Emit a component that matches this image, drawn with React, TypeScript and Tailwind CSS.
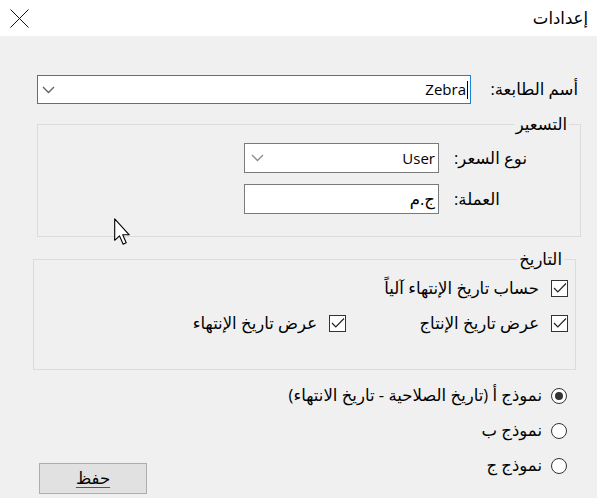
import React from "react";

const font = "font-['Open_Sans','DejaVu_Sans',sans-serif]";

function Chevron({ light }: { light?: boolean }) {
  return (
    <svg width="13" height="8" viewBox="0 0 13 8" className="shrink-0">
      <polyline
        points="1,1 6.5,6.5 12,1"
        fill="none"
        stroke={light ? "#8a8a8a" : "#606060"}
        strokeWidth="1.3"
      />
    </svg>
  );
}

function Check() {
  return (
    <span className="flex h-[17px] w-[17px] shrink-0 items-center justify-center border border-[#333] bg-white">
      <svg width="14" height="12" viewBox="0 0 14 12">
        <polyline points="1,6 4.8,10 13,1.5" fill="none" stroke="#222" strokeWidth="1.2" />
      </svg>
    </span>
  );
}

function Radio({ on }: { on?: boolean }) {
  return (
    <span className="flex h-[16px] w-[16px] shrink-0 items-center justify-center rounded-full border border-[#333] bg-white">
      {on && <span className="h-[8px] w-[8px] rounded-full bg-[#333]" />}
    </span>
  );
}

function Group({ title, className, children }: { title: string; className: string; children: React.ReactNode }) {
  return (
    <div className={"relative border border-[#dcdcdc] " + className}>
      <span className="absolute -top-[11px] right-[11px] bg-[#f0f0f0] px-[2px] leading-[20px]">{title}</span>
      {children}
    </div>
  );
}

export default function App() {
  return (
    <div dir="rtl" className={"relative flex h-[498px] w-[597px] flex-col overflow-hidden bg-[#f0f0f0] text-[16.5px] text-black " + font}>
      {/* title bar */}
      <div className="flex h-[36px] shrink-0 items-center justify-between bg-white pl-[10px] pr-[9px]">
        <span className="text-[16.5px]">إعدادات</span>
        <svg width="19" height="19" viewBox="0 0 19 19">
          <line x1="0.5" y1="0.5" x2="18.5" y2="18.5" stroke="#111" strokeWidth="1" />
          <line x1="18.5" y1="0.5" x2="0.5" y2="18.5" stroke="#111" strokeWidth="1" />
        </svg>
      </div>

      {/* printer name */}
      <div className="mt-[39px] flex items-center pr-[19px]">
        <label className="w-[107px] shrink-0">أسم الطابعة:</label>
        <div className="flex h-[29px] w-[434px] items-center justify-between border border-[#1e7fd6] bg-white pl-[4px] pr-[2px]">
          <span dir="ltr" className="flex items-center text-[15px]">
            Zebra
            <span className="ml-px h-[18px] w-px bg-black" />
          </span>
          <Chevron />
        </div>
      </div>

      {/* pricing */}
      <Group title="التسعير" className="ml-[37px] mr-[16px] mt-[20px] h-[113px]">
        <div className="flex flex-col gap-[11px] pr-[50px] pt-[18px]">
          <div className="flex items-center">
            <label className="w-[91px] shrink-0 pl-[15px] text-left">نوع السعر:</label>
            <div className="flex h-[30px] w-[195px] items-center justify-between border border-[#7a7a7a] bg-white pl-[6px] pr-[3px]">
              <span className="text-[15px]">User</span>
              <Chevron light />
            </div>
          </div>
          <div className="flex items-center">
            <label className="w-[91px] shrink-0 pl-[15px] text-left">العملة:</label>
            <div className="flex h-[30px] w-[195px] items-center border border-[#7a7a7a] bg-white pr-[3px]">
              <span>ج.م</span>
            </div>
          </div>
        </div>
      </Group>

      {/* date */}
      <Group title="التاريخ" className="ml-[33px] mr-[21px] mt-[22px] h-[111px]">
        <div className="flex flex-col gap-[10px] pr-[7px] pt-[16px]">
          <div className="flex items-center gap-[12px]">
            <Check />
            <span>حساب تاريخ الإنتهاء آلياً</span>
          </div>
          <div className="flex items-center">
            <div className="flex w-[222px] shrink-0 items-center gap-[12px]">
              <Check />
              <span>عرض تاريخ الإنتاج</span>
            </div>
            <div className="flex items-center gap-[12px]">
              <Check />
              <span>عرض تاريخ الإنتهاء</span>
            </div>
          </div>
        </div>
      </Group>

      {/* templates + save */}
      <div className="flex flex-1 justify-between pb-[4px] pl-[39px] pr-[30px] pt-[17px]">
        <div className="flex flex-col gap-[18px]">
          <div className="flex h-[17px] items-center gap-[9px]">
            <Radio on />
            <span>نموذج أ (تاريخ الصلاحية - تاريخ الانتهاء)</span>
          </div>
          <div className="flex h-[17px] items-center gap-[9px]">
            <Radio />
            <span>نموذج ب</span>
          </div>
          <div className="flex h-[17px] items-center gap-[9px]">
            <Radio />
            <span>نموذج ج</span>
          </div>
        </div>
        <button className="flex h-[31px] w-[108px] items-center justify-center self-end border border-[#adadad] bg-[#e1e1e1]">
          <span className="underline decoration-[#555] decoration-1 underline-offset-[3px]">حفظ</span>
        </button>
      </div>

      {/* mouse pointer */}
      <svg width="18" height="28" viewBox="0 0 13 20" className="pointer-events-none absolute left-[114px] top-[218px]">
        <path
          d="M0.5 0.5 L0.5 16 L4 12.8 L6.6 18.8 L8.8 17.8 L6.3 12 L11 12 Z"
          fill="#fff"
          stroke="#000"
          strokeWidth="0.8"
          strokeLinejoin="round"
        />
      </svg>
    </div>
  );
}
